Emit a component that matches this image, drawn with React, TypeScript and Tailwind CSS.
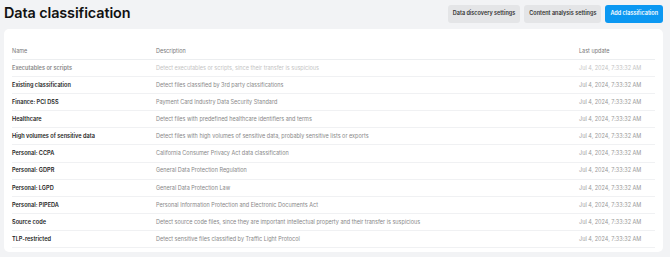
const rows = [
  {
    name: "Executables or scripts",
    description: "Detect executables or scripts, since their transfer is suspicious",
    disabled: true,
  },
  { name: "Existing classification", description: "Detect files classified by 3rd party classifications" },
  { name: "Finance: PCI DSS", description: "Payment Card Industry Data Security Standard" },
  { name: "Healthcare", description: "Detect files with predefined healthcare identifiers and terms" },
  {
    name: "High volumes of sensitive data",
    description: "Detect files with high volumes of sensitive data, probably sensitive lists or exports",
  },
  { name: "Personal: CCPA", description: "California Consumer Privacy Act data classification" },
  { name: "Personal: GDPR", description: "General Data Protection Regulation" },
  { name: "Personal: LGPD", description: "General Data Protection Law" },
  { name: "Personal: PIPEDA", description: "Personal Information Protection and Electronic Documents Act" },
  {
    name: "Source code",
    description: "Detect source code files, since they are important intellectual property and their transfer is suspicious",
  },
  { name: "TLP-restricted", description: "Detect sensitive files classified by Traffic Light Protocol" },
];

const App = () => {
  return (
    <div className="h-[257px] overflow-hidden bg-[#f2f3f5] pl-[4px] pr-[7px] pt-[4px] font-['Inter',sans-serif]">
      {/* Header */}
      <div className="flex h-[19px] items-center justify-between">
        <h1 className="text-[14.4px] font-semibold leading-none tracking-[-0.1px] text-[#111]">
          Data classification
        </h1>
        <div className="flex gap-[4px]">
          <button className="h-[18px] rounded-[3px] bg-[#e4e5e7] px-[5px] text-[5.5px] font-semibold text-[#333]">
            Data discovery settings
          </button>
          <button className="h-[18px] rounded-[3px] bg-[#e4e5e7] px-[5px] text-[5.5px] font-semibold text-[#333]">
            Content analysis settings
          </button>
          <button className="h-[18px] rounded-[3px] bg-[#0b98f2] px-[5px] text-[5.5px] font-semibold text-white">
            Add classification
          </button>
        </div>
      </div>

      {/* Card */}
      <div className="mt-[6px] h-[223px] overflow-hidden rounded-[5px] bg-white px-[8px] pt-[15px]">
        <div className="flex h-[16px] items-center border-b border-[#eceef0] text-[5.5px] text-[#777]">
          <div className="w-[144px]">Name</div>
          <div className="flex-1">Description</div>
          <div className="w-[76px]">Last update</div>
        </div>
        {rows.map((row) => (
          <div
            key={row.name}
            className="flex h-[17.1px] items-center border-b border-[#f0f1f3] text-[5.5px]"
          >
            <div
              className={
                row.disabled
                  ? "w-[144px] text-[5.6px] font-semibold text-[#888]"
                  : "w-[144px] text-[5.6px] font-semibold text-[#222]"
              }
            >
              {row.name}
            </div>
            <div className={row.disabled ? "flex-1 text-[#c4c4c4]" : "flex-1 text-[#888]"}>
              {row.description}
            </div>
            <div className={row.disabled ? "w-[76px] text-[#c4c4c4]" : "w-[76px] text-[#999]"}>
              Jul 4, 2024, 7:33:32 AM
            </div>
          </div>
        ))}
      </div>
    </div>
  );
};

export default App;
